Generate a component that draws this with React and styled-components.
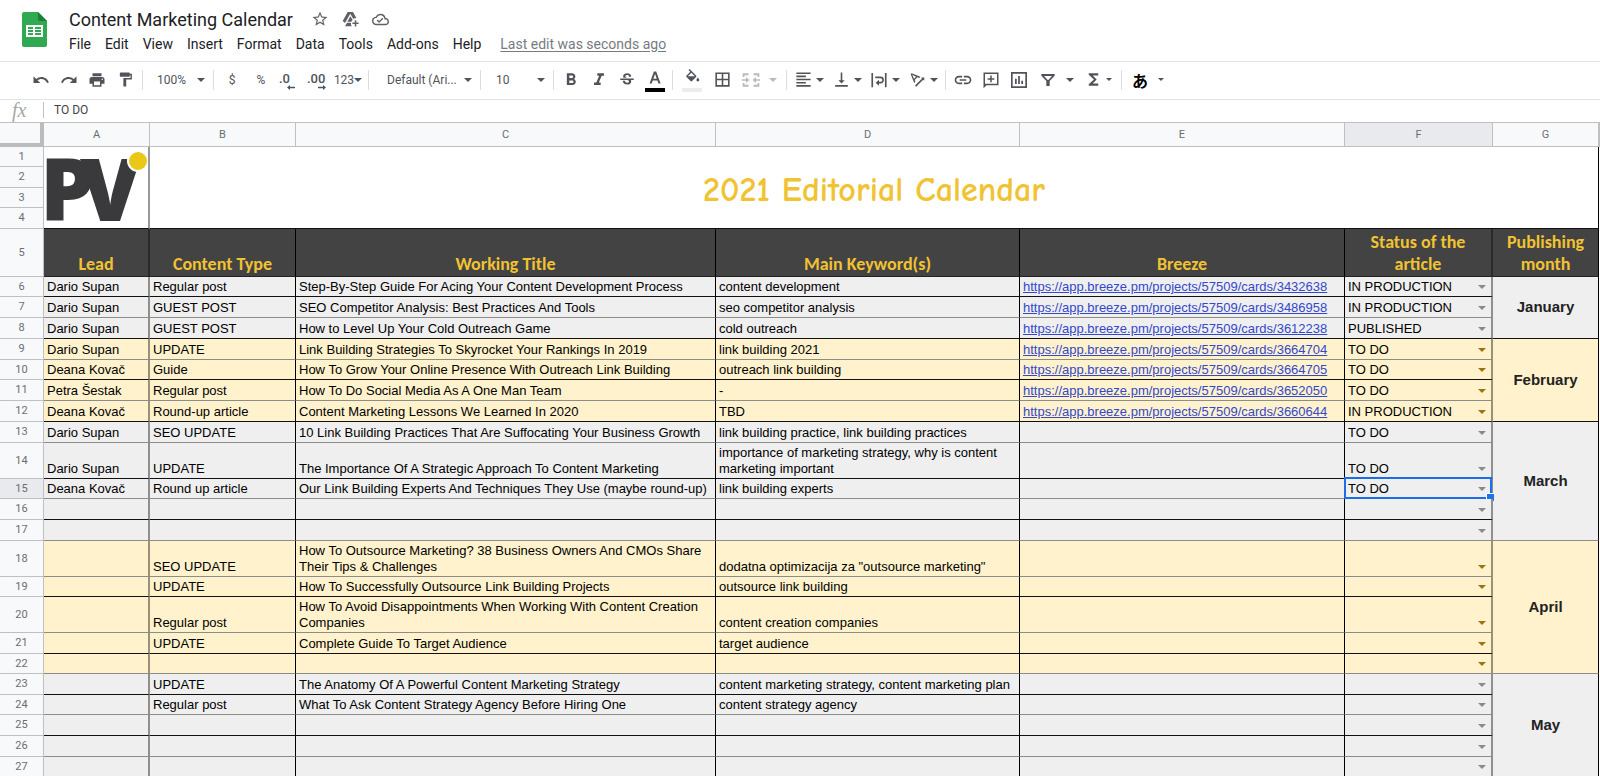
import React from 'react';
import styled, { createGlobalStyle } from 'styled-components';
import {
  MdUndo, MdRedo, MdPrint, MdFormatPaint, MdFormatBold, MdFormatItalic, MdStrikethroughS,
  MdBorderAll, MdFormatAlignLeft, MdVerticalAlignBottom, MdLink, MdFunctions, MdStarBorder,
  MdOutlineCloudDone, MdTextRotationAngleup,
} from 'react-icons/md';

const GlobalStyle = createGlobalStyle`
  * { box-sizing: border-box; }
  html, body { margin: 0; padding: 0; background: #fff; }
  button, input, select { font: inherit; color: inherit; margin: 0; }
`;

const ui = `Roboto, "Liberation Sans", sans-serif`;
const sheetFont = `"Liberation Sans", Arial, sans-serif`;

const Page = styled.div`
  display: flex;
  flex-direction: column;
  height: 100vh;
  overflow: hidden;
  font-family: ${ui};
  color: #202124;
`;

const Header = styled.header`
  display: flex;
  gap: 15px;
  height: 61px;
  padding: 12px 22px 0;
  flex: none;
`;

const HeaderText = styled.div`
  display: flex;
  flex-direction: column;
`;

const TitleRow = styled.div`
  display: flex;
  align-items: center;
  height: 14px;
`;

const DocName = styled.input`
  width: 243px;
  height: 24px;
  padding: 0 7px;
  border: 0;
  background: none;
  outline: none;
  font-size: 18px;
`;

const TitleIcon = styled.button`
  display: grid;
  place-items: center;
  width: 30px;
  height: 20px;
  padding: 0;
  border: 0;
  background: none;
  color: #5f6368;
  font-size: 16px;
`;

const MenuBar = styled.nav`
  display: flex;
  align-items: center;
  height: 38px;
  font-size: 14px;
`;

const MenuItem = styled.button`
  height: 22px;
  padding: 0 7px;
  border: 0;
  background: none;
`;

const LastEdit = styled.a`
  margin-left: 12px;
  color: #777b80;
  text-decoration: underline;
  text-underline-offset: 2px;
`;

const Toolbar = styled.div`
  display: flex;
  align-items: center;
  height: 39px;
  padding: 0 27px 2px;
  border: solid #e2e3e5;
  border-width: 1px 0;
  color: #50545a;
  font-size: 12px;
  flex: none;
`;

const Tool = styled.button`
  display: flex;
  align-items: center;
  justify-content: center;
  flex: none;
  width: ${(p) => p.$w || 28}px;
  height: 28px;
  padding: 0;
  border: 0;
  background: none;
  font-size: ${(p) => p.$size || 12}px;
  opacity: ${(p) => (p.disabled ? 0.4 : 1)};
  color: inherit;
`;

const SplitTool = styled(Tool)`
  width: ${(p) => (p.$wide ? 47 : 38)}px;
  justify-content: flex-start;
  gap: ${(p) => (p.$wide ? 3 : 0)}px;
`;

const SplitIcon = styled.span`
  display: grid;
  place-items: center;
  width: ${(p) => (p.$wide ? 30 : 26)}px;
  font-size: 19px;
`;

const Separator = styled.span`
  flex: none;
  width: 1px;
  height: 20px;
  margin: 0 3px;
  background: #dadce0;
`;

const Picker = styled.label`
  display: flex;
  align-items: center;
  flex: none;
  width: ${(p) => p.$w}px;
  padding: 0 5px 0 ${(p) => p.$pad}px;
`;

const PickerSelect = styled.select`
  appearance: none;
  flex: 1;
  min-width: 0;
  padding: 0;
  border: 0;
  background: none;
  font-size: 12px;
`;

const Language = styled.span`
  color: #000;
  font: 700 16px/20px "Noto Sans CJK JP", sans-serif;
`;

const FormulaBar = styled.div`
  display: flex;
  align-items: center;
  height: 22px;
  padding-bottom: 2px;
  flex: none;
`;

const Fx = styled.span`
  width: 43px;
  padding-left: 12px;
  color: #a8a8a8;
  font: italic 20px/20px "Liberation Serif", serif;
`;

const FormulaInput = styled.input`
  flex: 1;
  height: 16px;
  padding: 0 10px;
  border: 0;
  border-left: 1px solid #c0c0c0;
  outline: none;
  background: none;
  color: #444;
  font-size: 12px;
`;

const SheetArea = styled.main`
  flex: 1;
  min-height: 0;
  overflow: hidden;
  border-top: 1px solid #c0c0c0;
`;

const Sheet = styled.table`
  width: 100%;
  table-layout: fixed;
  border-collapse: separate;
  border-spacing: 0;
  font-family: ${sheetFont};
  font-size: 13px;
  line-height: 16px;
  color: #000;
`;

const Row = styled.tr`
  height: ${(p) => p.$h}px;
`;

const Heading = styled.th`
  padding: 0;
  border: solid #c0c0c0;
  border-width: 0 1px 1px 0;
  background: ${(p) => (p.$active ? '#e8eaed' : '#f8f9fb')};
  color: #6a6e73;
  font: 400 11px/14px ${ui};
  text-align: center;
`;

const Corner = styled(Heading)`
  border-color: #bcbcbc;
  border-width: 0 4px 4px 0;
`;

const HARD = '#111';
const SOFT = '#8c8c88';

const Cell = styled.td`
  padding: 0 3px 1px;
  border-style: solid;
  border-width: 0 ${(p) => (p.$double ? 2 : 1)}px 1px 0;
  border-right-color: ${(p) => (p.$double ? 'rgba(0, 0, 0, 0.4)' : '#000')};
  border-bottom-color: ${(p) => (p.$soft ? SOFT : HARD)};
  background: ${(p) => p.$fill};
  vertical-align: bottom;
  white-space: pre;
  overflow: hidden;
`;

const StatusCell = styled(Cell)`
  position: relative;
  overflow: visible;
  padding-right: 5px;
`;

const StatusPicker = styled.label`
  display: flex;
  align-items: center;
  height: 16px;
  color: ${(p) => (p.$warm ? '#9a7413' : '#8a8a8a')};
`;

const StatusSelect = styled.select`
  appearance: none;
  flex: 1;
  min-width: 0;
  height: 16px;
  padding: 0;
  border: 0;
  background: none;
  color: #000;
  line-height: 16px;
`;

const Selection = styled.span`
  position: absolute;
  inset: -2px -1px -1px -1px;
  border: 2px solid #1a6fe8;
  pointer-events: none;
  &::after {
    content: '';
    position: absolute;
    right: -4px;
    bottom: -4px;
    width: 7px;
    height: 7px;
    border: solid #fff;
    border-width: 1px 0 0 1px;
    background: #1a73e8;
  }
`;

const CardLink = styled.a`
  color: #3348cc;
  text-decoration: underline;
`;

const LogoCell = styled(Cell)`
  padding: 0;
  vertical-align: top;
  svg { display: block; overflow: visible; }
`;

const BannerCell = styled(Cell)`
  padding: 4px 0 0;
  text-align: center;
  vertical-align: middle;
  color: #f1c232;
  font: 700 34px/40px "Comic Sans MS", "Comic Neue", cursive;
`;

const TitleCell = styled.th`
  padding: 0 0 1px;
  border-style: solid;
  border-width: 0 ${(p) => (p.$double ? 2 : 1)}px 1px 0;
  border-color: ${(p) => (p.$double ? '#2a2a2a' : '#000')};
  border-bottom-color: #222;
  background: #434343;
  color: #f1c232;
  font: 700 18px/22px Calibri, Carlito, Lato, sans-serif;
  vertical-align: bottom;
  white-space: pre-line;
`;

const MonthCell = styled(Cell)`
  color: #222;
  font-size: 15px;
  font-weight: 700;
  text-align: center;
  vertical-align: middle;
`;

const Caret = ({ size = 8 }) => (
  <svg width={size} height={size / 2} viewBox="0 0 8 4" aria-hidden="true">
    <path d="M0 0h8L4 4z" fill="currentColor" />
  </svg>
);

const SheetsLogo = () => (
  <svg width="25" height="35" viewBox="0 0 25 35" aria-label="Sheets">
    <path d="M2 0h14l9 9v24a2 2 0 0 1-2 2H2a2 2 0 0 1-2-2V2a2 2 0 0 1 2-2z" fill="#31a852" />
    <path d="M16 0l9 9h-7a2 2 0 0 1-2-2z" fill="#1a8038" />
    <path d="M4 13h17v12H4z" fill="#fff" />
    <path d="M6 15h5v2H6zM13 15h6v2h-6zM6 18h5v2H6zM13 18h6v2h-6zM6 21h5v2H6zM13 21h6v2h-6z" fill="#31a852" />
  </svg>
);

const BrandLogo = () => (
  <svg width="104" height="80" viewBox="0 0 104 80" role="img" aria-label="PV">
    <text x="-4 36" y="74" fill="#3a3a3c" fontFamily="'Open Sans', sans-serif" fontWeight="800" fontSize="87">PV</text>
    <circle cx="94" cy="14" r="10" fill="#ebc816" stroke="#fff" strokeWidth="2" />
  </svg>
);

const Glyph = ({ d, size = 19, children }) => (
  <svg width={size} height={size} viewBox="0 0 24 24" fill="currentColor" aria-hidden="true">
    {d && <path d={d} />}
    {children}
  </svg>
);

const DriveIcon = () => (
  <Glyph size={17} d="M8 1.500h7.500l4.800 8.300A6.500 6.500 0 0 0 16 11.200L11.700 4 4.300 17 1 14zM7 16.500h5.700a6.500 6.500 0 0 0 1 5H4.300zM11.800 7.500l3.300 5.200a6.500 6.500 0 0 0-1.800 2.300H7.600zM18 13h2.200v3.300h3.300v2.200h-3.300v3.300H18v-3.300h-3.300v-2.200H18z" />
);

const TextColor = () => (
  <Glyph size={24} d="M6.6 15.5h2.1l1.1-3h4.6l1.1 3h2.1L13.2 3.5h-2.3zM10.4 10.7l1.6-4.6h.1l1.6 4.6z">
    <path d="M2 20h20v4H2z" fill="#000" />
  </Glyph>
);

const FillColor = () => (
  <Glyph size={24}>
    <g transform="translate(4 1) scale(.73)">
      <path d="M16.56 8.94L7.62 0 6.21 1.41l2.38 2.38-5.15 5.15c-.59.59-.59 1.54 0 2.12l5.5 5.5c.29.29.68.44 1.06.44s.77-.15 1.06-.44l5.5-5.5c.59-.58.59-1.53 0-2.12zM5.21 10L10 5.21 14.79 10H5.21zM19 11.5s-2 2.17-2 3.5c0 1.1.9 2 2 2s2-.9 2-2c0-1.33-2-3.5-2-3.5z" />
    </g>
    <path d="M2 20h20v4H2z" fill="#ececec" />
  </Glyph>
);

const MergeIcon = () => (
  <Glyph size={20} d="M2 4h7v2.200H4.200V8.500H2zM22 4h-7v2.200h4.800v2.300H22zM2 20h7v-2.200H4.200v-2.300H2zM22 20h-7v-2.200h4.800v-2.300H22zM1 11h5V8.500l4 3.500-4 3.500V13H1zM23 11h-5V8.500L14 12l4 3.500V13h5z" />
);

const WrapIcon = () => (
  <Glyph size={18}>
    <path d="M3 2.500v19M21 2.500v19M7 8.500h7a3.500 3.500 0 0 1 0 7h-3" fill="none" stroke="currentColor" strokeWidth="2.200" />
    <path d="M7.500 15.500l4.500-4v8z" />
  </Glyph>
);

const CommentIcon = () => (
  <Glyph size={18} d="M2 2h20v17H6l-4 4zM4 4v13h16V4zM11 6h2v3.500h3.500v2H13V15h-2v-3.500H7.500v-2H11z" />
);

const ChartIcon = () => (
  <Glyph size={16} d="M0 0h24v24H0zM2.500 2.500v19h19v-19zM6 10h2.600v8H6zM10.700 6h2.600v12h-2.600zM15.400 13H18v5h-2.600z">
  </Glyph>
);

const FilterIcon = () => (
  <Glyph size={16} d="M2 3h20v2.500l-7.500 8V21h-5v-7.500L2 5.500zM6 6l5.500 6h1L18 6z" />
);

const Decimal = ({ text, dir }) => (
  <svg width="20" height="20" viewBox="0 0 20 20" fill="currentColor" aria-hidden="true">
    <text x="0" y="13" fontSize="13" fontWeight="500">{text}</text>
    <path
      d={dir === 'left'
        ? 'M8 17.500l3-2.500v1.700h5v1.600h-5V20z'
        : 'M19 17.500L16 15v1.700h-5v1.600h5V20z'}
    />
  </svg>
);

const Split = ({ label, wide, disabled, small, children }) => (
  <SplitTool $wide={wide} disabled={disabled} aria-label={label}>
    <SplitIcon $wide={wide}>{children}</SplitIcon>
    <Caret size={small ? 6 : 8} />
  </SplitTool>
);

const GREY = '#efefef';
const YELLOW = '#fff2cc';
const BREEZE = 'https://app.breeze.pm/projects/57509/cards/';
const STATUSES = ['', 'TO DO', 'IN PRODUCTION', 'PUBLISHED'];

const rows = [
  { n: 6, h: 20, lead: 'Dario Supan', type: 'Regular post', title: 'Step-By-Step Guide For Acing Your Content Development Process', key: 'content development', card: '3432638', status: 'IN PRODUCTION', month: 'January', span: 3 },
  { n: 7, h: 21, lead: 'Dario Supan', type: 'GUEST POST', title: 'SEO Competitor Analysis: Best Practices And Tools', key: 'seo competitor analysis', card: '3486958', status: 'IN PRODUCTION', soft: true },
  { n: 8, h: 21, lead: 'Dario Supan', type: 'GUEST POST', title: 'How to Level Up Your Cold Outreach Game', key: 'cold outreach', card: '3612238', status: 'PUBLISHED' },
  { n: 9, h: 21, warm: true, lead: 'Dario Supan', type: 'UPDATE', title: 'Link Building Strategies To Skyrocket Your Rankings In 2019', key: 'link building 2021', card: '3664704', status: 'TO DO', soft: true, month: 'February', span: 4 },
  { n: 10, h: 20, warm: true, lead: 'Deana Kovač', type: 'Guide', title: 'How To Grow Your Online Presence With Outreach Link Building', key: 'outreach link building', card: '3664705', status: 'TO DO' },
  { n: 11, h: 21, warm: true, lead: 'Petra Šestak', type: 'Regular post', title: 'How To Do Social Media As A One Man Team', key: '-', card: '3652050', status: 'TO DO', soft: true },
  { n: 12, h: 21, warm: true, lead: 'Deana Kovač', type: 'Round-up article', title: 'Content Marketing Lessons We Learned In 2020', key: 'TBD', card: '3660644', status: 'IN PRODUCTION' },
  { n: 13, h: 21, lead: 'Dario Supan', type: 'SEO UPDATE', title: '10 Link Building Practices That Are Suffocating Your Business Growth', key: 'link building practice, link building practices', status: 'TO DO', soft: true, month: 'March', span: 5, softMonth: true },
  { n: 14, h: 36, lead: 'Dario Supan', type: 'UPDATE', title: 'The Importance Of A Strategic Approach To Content Marketing', key: 'importance of marketing strategy, why is content\nmarketing important', status: 'TO DO' },
  { n: 15, h: 20, lead: 'Deana Kovač', type: 'Round up article', title: 'Our Link Building Experts And Techniques They Use (maybe round-up)', key: 'link building experts', status: 'TO DO', soft: true, selected: true },
  { n: 16, h: 21 },
  { n: 17, h: 21, soft: true },
  { n: 18, h: 36, warm: true, type: 'SEO UPDATE', title: 'How To Outsource Marketing? 38 Business Owners And CMOs Share\nTheir Tips & Challenges', key: 'dodatna optimizacija za "outsource marketing"', soft: true, month: 'April', span: 5, softMonth: true },
  { n: 19, h: 20, warm: true, type: 'UPDATE', title: 'How To Successfully Outsource Link Building Projects', key: 'outsource link building' },
  { n: 20, h: 36, warm: true, type: 'Regular post', title: 'How To Avoid Disappointments When Working With Content Creation\nCompanies', key: 'content creation companies', soft: true },
  { n: 21, h: 21, warm: true, type: 'UPDATE', title: 'Complete Guide To Target Audience', key: 'target audience' },
  { n: 22, h: 20, warm: true, soft: true },
  { n: 23, h: 21, type: 'UPDATE', title: 'The Anatomy Of A Powerful Content Marketing Strategy', key: 'content marketing strategy, content marketing plan', month: 'May', span: 5 },
  { n: 24, h: 20, type: 'Regular post', title: 'What To Ask Content Strategy Agency Before Hiring One', key: 'content strategy agency', soft: true },
  { n: 25, h: 21 },
  { n: 26, h: 21, soft: true },
  { n: 27, h: 20 },
];

const Column = styled.col`
  width: ${(p) => p.$w}px;
`;

const DataRow = ({ r }) => {
  const cell = { $fill: r.warm ? YELLOW : GREY, $soft: r.soft };
  return (
    <Row $h={r.h}>
      <Heading scope="row" $active={r.selected}>{r.n}</Heading>
      <Cell {...cell} $double>{r.lead}</Cell>
      <Cell {...cell}>{r.type}</Cell>
      <Cell {...cell}>{r.title}</Cell>
      <Cell {...cell}>{r.key}</Cell>
      <Cell {...cell}>{r.card && <CardLink href={BREEZE + r.card}>{BREEZE + r.card}</CardLink>}</Cell>
      <StatusCell {...cell} $double>
        <StatusPicker $warm={r.warm}>
          <StatusSelect defaultValue={r.status || ''} aria-label={`Status, row ${r.n}`}>
            {STATUSES.map((s) => <option key={s} value={s}>{s}</option>)}
          </StatusSelect>
          <Caret />
        </StatusPicker>
        {r.selected && <Selection />}
      </StatusCell>
      {r.month && (
        <MonthCell rowSpan={r.span} $fill={cell.$fill} $soft={r.softMonth}>{r.month}</MonthCell>
      )}
      <td />
    </Row>
  );
};

export default function App() {
  return (
    <Page>
      <GlobalStyle />
      <Header>
        <SheetsLogo />
        <HeaderText>
          <TitleRow>
            <DocName aria-label="Document name" defaultValue="Content Marketing Calendar" />
            <TitleIcon aria-label="Star"><MdStarBorder size={18} /></TitleIcon>
            <TitleIcon aria-label="Add to Drive"><DriveIcon /></TitleIcon>
            <TitleIcon aria-label="Saved"><MdOutlineCloudDone size={17} /></TitleIcon>
          </TitleRow>
          <MenuBar>
            {['File', 'Edit', 'View', 'Insert', 'Format', 'Data', 'Tools', 'Add-ons', 'Help'].map((m) => (
              <MenuItem key={m}>{m}</MenuItem>
            ))}
            <LastEdit href="#history">Last edit was seconds ago</LastEdit>
          </MenuBar>
        </HeaderText>
      </Header>

      <Toolbar role="toolbar" aria-label="Formatting">
        <Tool $size={18} aria-label="Undo"><MdUndo /></Tool>
        <Tool $size={18} aria-label="Redo"><MdRedo /></Tool>
        <Tool $size={18} aria-label="Print"><MdPrint /></Tool>
        <Tool $size={17} aria-label="Paint format"><MdFormatPaint /></Tool>
        <Separator />
        <Picker $w={64} $pad={11}>
          <PickerSelect aria-label="Zoom"><option>100%</option></PickerSelect>
          <Caret />
        </Picker>
        <Separator />
        <Tool $w={30}>$</Tool>
        <Tool>%</Tool>
        <Tool aria-label="Decrease decimals"><Decimal text=".0" dir="left" /></Tool>
        <Tool aria-label="Increase decimals"><Decimal text=".00" dir="right" /></Tool>
        <Tool $w={34}>123<Caret /></Tool>
        <Separator />
        <Picker $w={105} $pad={15}>
          <PickerSelect aria-label="Font"><option>Default (Ari...</option></PickerSelect>
          <Caret />
        </Picker>
        <Separator />
        <Picker $w={66} $pad={12}>
          <PickerSelect aria-label="Font size"><option>10</option></PickerSelect>
          <Caret />
        </Picker>
        <Separator />
        <Tool $size={20} aria-label="Bold"><MdFormatBold /></Tool>
        <Tool $size={20} aria-label="Italic"><MdFormatItalic /></Tool>
        <Tool $size={18} aria-label="Strikethrough"><MdStrikethroughS /></Tool>
        <Tool aria-label="Text color"><TextColor /></Tool>
        <Separator />
        <Tool $w={32} aria-label="Fill color"><FillColor /></Tool>
        <Tool $size={19} aria-label="Borders"><MdBorderAll /></Tool>
        <Split label="Merge cells" wide disabled><MergeIcon /></Split>
        <Separator />
        <Split label="Horizontal align"><MdFormatAlignLeft /></Split>
        <Split label="Vertical align"><MdVerticalAlignBottom /></Split>
        <Split label="Text wrapping"><WrapIcon /></Split>
        <Split label="Text rotation"><MdTextRotationAngleup /></Split>
        <Separator />
        <Tool $size={20} aria-label="Insert link"><MdLink /></Tool>
        <Tool aria-label="Insert comment"><CommentIcon /></Tool>
        <Tool aria-label="Insert chart"><ChartIcon /></Tool>
        <Split label="Filter" wide><FilterIcon /></Split>
        <Split label="Functions" small><MdFunctions /></Split>
        <Separator />
        <Split label="Input tools" wide small><Language>あ</Language></Split>
      </Toolbar>

      <FormulaBar>
        <Fx>fx</Fx>
        <FormulaInput aria-label="Formula" defaultValue="TO DO" />
      </FormulaBar>

      <SheetArea>
        <Sheet>
          <colgroup>
            {[44, 106, 146, 420, 304, 325, 148, 106].map((w, i) => <Column key={i} $w={w} />)}
            <col />
          </colgroup>
          <thead>
            <Row $h={24}>
              <Corner aria-label="Select all" />
              {['A', 'B', 'C', 'D', 'E', 'F', 'G'].map((c) => (
                <Heading key={c} scope="col" $active={c === 'F'}>{c}</Heading>
              ))}
              <Heading />
            </Row>
          </thead>
          <tbody>
            <Row $h={20}>
              <Heading scope="row">1</Heading>
              <LogoCell rowSpan={4} $fill="#fff" $double><BrandLogo /></LogoCell>
              <BannerCell rowSpan={4} colSpan={6} $fill="#fff">2021 Editorial Calendar</BannerCell>
              <td />
            </Row>
            <Row $h={21}><Heading scope="row">2</Heading><td /></Row>
            <Row $h={20}><Heading scope="row">3</Heading><td /></Row>
            <Row $h={21}><Heading scope="row">4</Heading><td /></Row>
            <Row $h={48}>
              <Heading scope="row">5</Heading>
              <TitleCell $double>Lead</TitleCell>
              <TitleCell>Content Type</TitleCell>
              <TitleCell>Working Title</TitleCell>
              <TitleCell>Main Keyword(s)</TitleCell>
              <TitleCell>Breeze</TitleCell>
              <TitleCell $double>{'Status of the\narticle'}</TitleCell>
              <TitleCell>{'Publishing\nmonth'}</TitleCell>
              <td />
            </Row>
            {rows.map((r) => <DataRow key={r.n} r={r} />)}
          </tbody>
        </Sheet>
      </SheetArea>
    </Page>
  );
}
